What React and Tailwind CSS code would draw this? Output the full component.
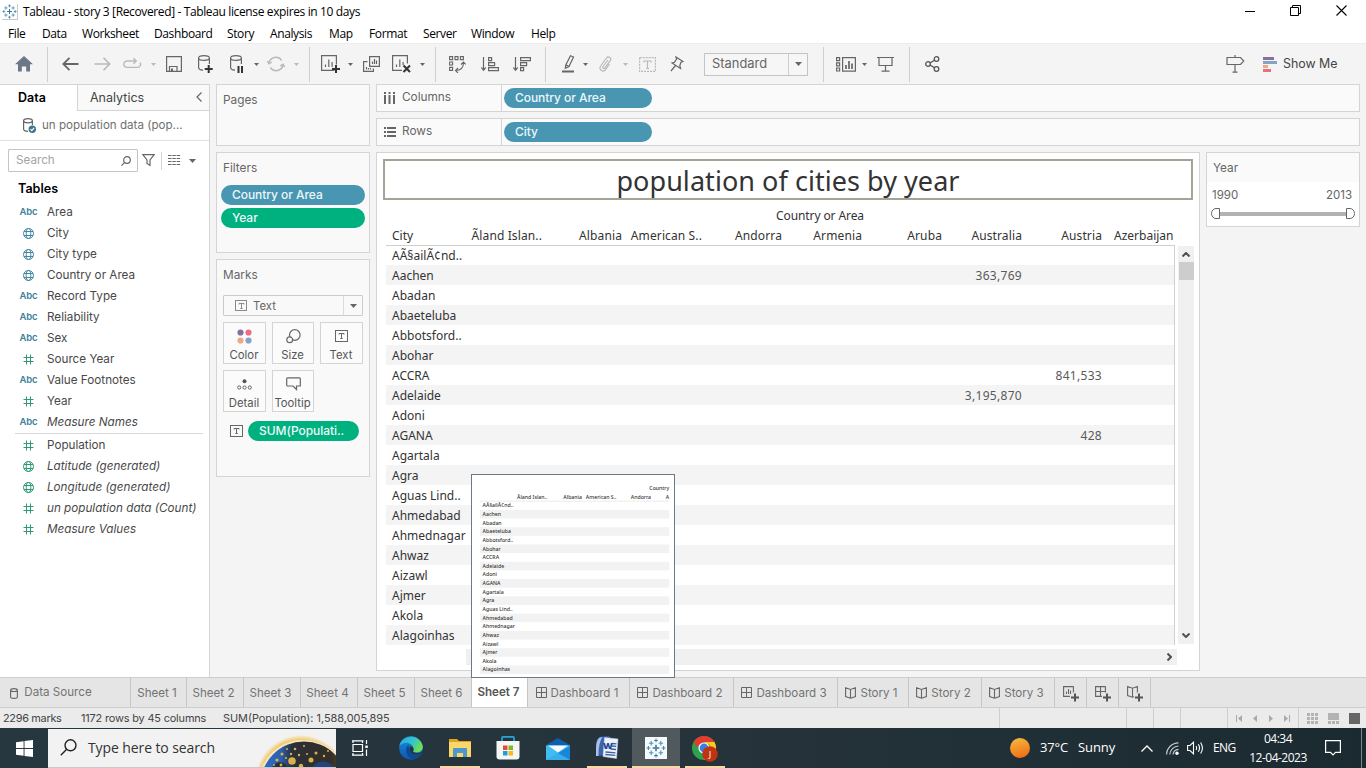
import React from 'react';

const UI = "font-['Inter',sans-serif]";
const VIZ = "font-['Noto_Sans',sans-serif]";
const SYS = "font-['Open_Sans',sans-serif]";

function Svg({ w, h, children, className = '', stroke = '#666', sw = 1.2 }) {
  return (
    <svg width={w} height={h} viewBox={`0 0 ${w} ${h}`} fill="none" stroke={stroke} strokeWidth={sw} className={`block shrink-0 ${className}`}>
      {children}
    </svg>
  );
}

function Slot({ className, children }) {
  return <div className={`flex h-full shrink-0 items-center justify-center ${className}`}>{children}</div>;
}

function Sep({ className = '' }) {
  return <div className={`h-[35px] w-px shrink-0 bg-[#cfcfcf] ${className}`} />;
}

function Caret({ color = '#666' }) {
  return (
    <Svg w={5} h={3} stroke="none">
      <path d="M0 0H5L2.5 3Z" fill={color} />
    </Svg>
  );
}

function TableauMark({ size, className = '' }) {
  return (
    <svg width={size} height={size} viewBox="0 0 24 24" fill="none" className={`block shrink-0 ${className}`}>
      <path d="M12 8v8M8 12h8" stroke="#3c7797" strokeWidth="1.8" />
      <path d="M6.2 3.6v5.4M3.5 6.3h5.4M17.8 3.6v5.4M15.1 6.3h5.4M6.2 15v5.4M3.5 17.7h5.4M17.8 15v5.4M15.1 17.7h5.4" stroke="#5b93b1" strokeWidth="1.4" />
      <path d="M12 .6v4.6M9.7 2.9h4.6M12 18.8v4.6M9.7 21.1h4.6M2.9 9.7v4.6M.6 12h4.6M21.1 9.7v4.6M18.8 12h4.6" stroke="#4f86a5" strokeWidth="1.3" />
    </svg>
  );
}

function TitleBar() {
  return (
    <div className="flex h-[22px] items-center bg-white">
      <div className="ml-[2px] mt-[1px] flex size-4 items-center justify-center border-b border-r border-[#c9c9c9]">
        <TableauMark size={15} />
      </div>
      <div className={`${SYS} ml-[5px] mt-[2px] whitespace-nowrap text-[12px] tracking-[-0.37px] text-black`}>
        Tableau - story 3 [Recovered] - Tableau license expires in 10 days
      </div>
      <div className="ml-auto flex items-center pr-[19px]">
        <Svg w={10} h={11} stroke="#000" sw={1}><path d="M0 5.5H10" /></Svg>
        <Svg w={11} h={11} stroke="#000" sw={1} className="-mt-px ml-[35px]"><path d="M.5 2.5h8v8h-8zM2.5 2.5v-2h8v8h-2" /></Svg>
        <Svg w={11} h={11} stroke="#000" sw={1.1} className="-mt-px ml-[35px]"><path d="M.5.5l10 10M10.500.5l-10 10" /></Svg>
      </div>
    </div>
  );
}

const MENUS = [
  ['File', 'w-[34px]'], ['Data', 'w-[40px]'], ['Worksheet', 'w-[72px]'], ['Dashboard', 'w-[73px]'], ['Story', 'w-[43px]'],
  ['Analysis', 'w-[59px]'], ['Map', 'w-[40px]'], ['Format', 'w-[54px]'], ['Server', 'w-[48px]'], ['Window', 'w-[60px]'], ['Help', 'w-[40px]'],
];

function MenuBar() {
  return (
    <div className={`flex h-[21px] items-center bg-white pl-[8px] pt-[3px] ${SYS} text-[12px] tracking-[-0.38px] text-black`}>
      {MENUS.map(([m, w]) => <div key={m} className={`${w} shrink-0`}>{m}</div>)}
    </div>
  );
}

const OFF = '#b9b9b9';

function Toolbar() {
  return (
    <div className="flex h-[41px] items-center border-t border-[#ececec] bg-[#f4f4f4]">
      <Slot className="w-[47px]">
        <Svg w={18} h={16} stroke="none"><path d="M9 0L18 8.300H15V15.500H11.200V10.500H6.800V15.500H3V8.300H0Z" fill="#6b7785" /></Svg>
      </Slot>
      <Sep />
      <Slot className="ml-[6px] w-8"><Svg w={17} h={14} sw={1.8}><path d="M7.500.8L1.300 7l6.200 6.200M1.500 7H16.500" /></Svg></Slot>
      <Slot className="w-8"><Svg w={17} h={14} sw={1.6} stroke={OFF}><path d="M9.500.8L15.700 7l-6.200 6.200M15.500 7H.5" /></Svg></Slot>
      <Slot className="w-7"><Svg w={19} h={12} stroke={OFF} sw={1.4}><path d="M12.500 3H4a3.200 3.200 0 0 0 0 6.400H14.500a3 3 0 0 0 2.500-4.800M10.500.300L13.200 3l-2.700 2.700" /></Svg></Slot>
      <Slot className="w-[14px]"><Caret color={OFF} /></Slot>
      <Slot className="w-7"><Svg w={16} h={16}><path d="M.6.6H15.400V15.400H.6ZM3.500 15.400V10.500H11V15.400" /><path d="M5 12.500h2v2.500H5z" fill="#666" stroke="none" /></Svg></Slot>
      <Slot className="w-[35px]">
        <Svg w={15} h={18} className="mr-px"><path d="M11.400 9V3M.6 3V12.500C.6 14 2.500 15 5 15.100M11.400 3C11.400 4.500 9 5.300 6 5.300S.6 4.500.6 3 3 .6 6 .6s5.400 1 5.400 2.400Z" /><path d="M10.700 10v8M6.700 14h8" stroke="#333" strokeWidth="2" /></Svg>
      </Slot>
      <Slot className="w-[26px]">
        <Svg w={13} h={18}><path d="M11.400 9V3M.6 3V12.500C.6 14 2.500 15 5 15.100M11.400 3C11.400 4.500 9 5.300 6 5.300S.6 4.500.6 3 3 .6 6 .6s5.400 1 5.400 2.400Z" /><path d="M8.500 11v7M12 11v7" stroke="#333" strokeWidth="2" /></Svg>
      </Slot>
      <Slot className="w-[14px]"><Caret /></Slot>
      <Slot className="w-[26px]"><Svg w={18} h={16} stroke={OFF} sw={1.4}><path d="M2 7A7 7 0 0 1 14.700 4.500M16 9A7 7 0 0 1 3.300 11.500M.2 5L2 7.800 4.800 6M17.800 11L16 8.200 13.200 10" /></Svg></Slot>
      <Slot className="w-[14px]"><Caret color={OFF} /></Slot>
      <Sep className="ml-[6px]" />
      <Slot className="ml-[6px] w-7">
        <Svg w={19} h={18}><path d="M13.500 15.400H.6V.6H15.400V9.500M4.500 12V9.500M7.800 12V4.500M11.100 12V7" /><path d="M15 10v8M11 14h8" stroke="#333" strokeWidth="2" /></Svg>
      </Slot>
      <Slot className="w-3"><Caret /></Slot>
      <Slot className="w-8"><Svg w={17} h={16} className="mr-[2px]"><path d="M6.600.6H16.400V10.400H6.600ZM4.500 5.600H.6V15.400H10.400V12.500M3.500 13.500V11M5.500 13.500V12M7.500 13.500V12M9.500 8V5.500M11.500 8V3M13.500 8V4.500" /></Svg></Slot>
      <Slot className="w-7">
        <Svg w={20} h={18}><path d="M10 15.400H.6V.6H15.400V8.500M4.500 12V9.500M7.800 12V4.500M11.100 10V7" /><path d="M11.500 10.500l6.500 6.500M18 10.500L11.500 17" stroke="#333" strokeWidth="2" /></Svg>
      </Slot>
      <Slot className="w-3"><Caret /></Slot>
      <Sep className="ml-[7px]" />
      <Slot className="ml-[5px] w-8">
        <Svg w={17} h={17} sw={1.1}><path d="M.6.6h3v3h-3zM6 .6h3v3H6zM11.400.6h3v3h-3zM.6 6h3v3h-3zM.6 11.400h3v3h-3z" /><path d="M6.500 14.500C11.500 14.500 14.500 11.500 14.500 6.500M12 8.500L14.500 6l2.300 2.500M9 12L6.500 14.500 9 17" /></Svg>
      </Slot>
      <Slot className="w-[34px]">
        <Svg w={18} h={15}><path d="M2.500 0V13M.3 10.500L2.500 13.200 4.700 10.500M7.600.6h3v3h-3zM7.600 5.600h6v3h-6zM7.600 10.600h9.800v3H7.600z" /></Svg>
      </Slot>
      <Slot className="w-[30px]">
        <Svg w={18} h={15}><path d="M2.500 0V13M.3 10.500L2.500 13.200 4.700 10.500M7.600.6h9.800v3H7.600zM7.600 5.600h6v3h-6zM7.600 10.600h3v3h-3z" /></Svg>
      </Slot>
      <Sep className="ml-2" />
      <Slot className="ml-3 w-5">
        <Svg w={13} h={18}><path d="M8.500.700L11.500 2 7 11.500 3.300 13.200 3.800 9.900ZM3.800 9.900L7 11.500" /><path d="M0 16.500H12" stroke="#666" strokeWidth="2" /></Svg>
      </Slot>
      <Slot className="w-[14px]"><Caret /></Slot>
      <Slot className="w-[26px]"><Svg w={13} h={16} stroke={OFF}><path d="M9 4L4 10.500a1.200 1.200 0 0 0 2 1.400L11.300 4.600A2.300 2.300 0 0 0 7.500 2L1.700 10A3 3 0 0 0 6.500 13.700L10.500 8" /></Svg></Slot>
      <Slot className="w-[14px]"><Caret color={OFF} /></Slot>
      <Slot className="w-8">
        <Svg w={17} h={15} stroke={OFF} className="mr-px"><path d="M.6.6H16.400V14.400H.6Z" strokeDasharray="2 1" /><path d="M5 5.500V4H12V5.500M8.500 4V11.500M7 11.500h3" /></Svg>
      </Slot>
      <Slot className="w-[26px]"><Svg w={14} h={16}><path d="M6 1l7 4.500-2 .700-1.200 3.300.700 3L2 7l2.500-.800L6.600 3Z M5.500 9.500L1 15" /></Svg></Slot>
      <div className="ml-[14px] flex h-[23px] w-[104px] shrink-0 items-center border border-[#c4c4c4] bg-[#f6f6f6]">
        <div className={`${UI} grow pl-[7px] text-[12.9px] text-[#666]`}>Standard</div>
        <div className="flex h-full w-[19px] items-center justify-center border-l border-[#cfcfcf]">
          <Svg w={7} h={4} stroke="none"><path d="M0 0H7L3.500 4Z" fill="#666" /></Svg>
        </div>
      </div>
      <Sep className="ml-[15px]" />
      <Slot className="ml-2 w-7">
        <Svg w={20} h={15}><path d="M.6.6h3v3h-3zM.6 5.800h3v3h-3zM.6 11h3v3h-3zM6.600.6H19.400V14.100H6.600Z" /><path d="M10 12V8M13 12V4M16 12V6.500" strokeWidth="1.7" /></Svg>
      </Slot>
      <Slot className="w-2"><Caret /></Slot>
      <Slot className="w-[34px]"><Svg w={17} h={16}><path d="M0 1.500H17M2 1.500V9.500H15V1.500M8.500 9.500V15M4.500 15.200H12.500" /></Svg></Slot>
      <Sep className="ml-[7px]" />
      <Slot className="ml-2 w-7">
        <Svg w={15} h={16} sw={1.3} stroke="#555"><circle cx="3" cy="8" r="2.300" /><circle cx="11.500" cy="3" r="2.300" /><circle cx="11.500" cy="13" r="2.300" /><path d="M5 7L9.500 4.200M5 9l4.500 2.800" /></Svg>
      </Slot>
      <Svg w={19} h={18} className="ml-auto"><path d="M1 2.500H14.500L17.800 6 14.500 9.500H1ZM9 0V2.500M9 9.500V17M6.500 17.200h5" /></Svg>
      <Svg w={14} h={15} stroke="none" className="ml-[18px]">
        <path d="M0 0h11v3H0z" fill="#86719a" /><path d="M0 4h14v3H0z" fill="#85a3c5" /><path d="M0 8h5v3H0z" fill="#eda981" /><path d="M0 12h8v3H0z" fill="#e8707d" />
      </Svg>
      <div className={`${UI} ml-[6px] mr-[28px] w-[55px] text-[12.4px] text-[#444]`}>Show&nbsp;Me</div>
    </div>
  );
}

const BLUE = '#4587a5';
const GREEN = '#2f9a75';

function FieldIcon({ kind, color }) {
  if (kind === 'abc') return <span className="text-[9.5px] font-semibold tracking-[-0.1px] text-[#417f9b]">Abc</span>;
  if (kind === 'num') return <Svg w={11} h={11} stroke={color} sw={1}><path d="M3.500 .5V10.500M7.500 .5V10.500M.5 3.500H10.500M.5 7.500H10.500" /></Svg>;
  return (
    <Svg w={11} h={11} stroke={color} sw={1}>
      <circle cx="5.500" cy="5.500" r="5" /><ellipse cx="5.500" cy="5.500" rx="2.300" ry="5" /><path d="M1 3.500H10M1 7.500H10" />
    </Svg>
  );
}

const DIMS = [
  ['abc', 'Area'], ['geo', 'City'], ['geo', 'City type'], ['geo', 'Country or Area'], ['abc', 'Record Type'], ['abc', 'Reliability'],
  ['abc', 'Sex'], ['num', 'Source Year', GREEN], ['abc', 'Value Footnotes'], ['num', 'Year', GREEN], ['abc', 'Measure Names', BLUE, true],
];
const MEAS = [
  ['num', 'Population'], ['geo', 'Latitude (generated)', true], ['geo', 'Longitude (generated)', true],
  ['num', 'un population data (Count)', true], ['num', 'Measure Values', true],
];

function Field({ kind, name, color, italic }) {
  return (
    <div className="flex h-[21px] items-center text-[11.7px] text-[#484848]">
      <div className="ml-[18px] flex w-[21px] shrink-0 justify-center">
        <FieldIcon kind={kind} color={color} />
      </div>
      <div className={`ml-[8px] whitespace-nowrap ${italic ? 'italic' : ''}`}>{name}</div>
    </div>
  );
}

function Sidebar() {
  return (
    <div className={`flex w-[210px] shrink-0 flex-col border-r border-[#d4d4d4] bg-white ${UI}`}>
      <div className="flex h-[27px] shrink-0 border-t border-[#d4d4d4] text-[12.5px]">
        <div className="w-[77px] pl-[18px] pt-[4px] font-semibold text-black">Data</div>
        <div className="flex grow items-start justify-between border-b border-l border-[#d4d4d4] bg-[#f9f9f9] pl-[12px] pr-[7px] pt-[4px] text-[#444]">
          <span>Analytics</span>
          <Svg w={6} h={10} className="mt-[3px]"><path d="M5.500.5L1 5l4.500 4.500" /></Svg>
        </div>
      </div>
      <div className="flex h-[30px] shrink-0 items-center border-b border-[#e0e0e0] pl-[23px] text-[11.6px] text-[#707070]">
        <Svg w={13} h={15}>
          <path d="M9.400 7V2.800M.6 2.800V11C.6 12.500 2.500 13.300 5 13.300M9.400 2.800C9.400 4 7.500 4.800 5 4.800S.6 4 .6 2.800 2.500.6 5 .6s4.400 1 4.400 2.200Z" />
          <circle cx="9.300" cy="11.200" r="3.700" fill="#38788f" stroke="none" /><path d="M7.500 11.200l1.300 1.400 2.300-2.700" stroke="#fff" />
        </Svg>
        <span className="ml-[6px] whitespace-nowrap">un population data (pop...</span>
      </div>
      <div className="flex h-[39px] shrink-0 items-center pl-[8px]">
        <div className="flex h-[23px] w-[130px] items-center justify-between rounded-[1px] border border-[#c4c4c4] pl-[7px] pr-[6px] text-[11.7px] text-[#a5a5a5]">
          <span>Search</span>
          <Svg w={10} h={10}><circle cx="6" cy="4" r="3.300" /><path d="M3.700 6.400L.5 9.600" /></Svg>
        </div>
        <Svg w={13} h={13} className="ml-[4px]"><path d="M.8.6H12.200L8 6V11.500L5 9.500V6Z" /></Svg>
        <div className="ml-[6px] h-[18px] w-px bg-[#d4d4d4]" />
        <Svg w={13} h={11} className="ml-[6px]"><path d="M0 .5H12.500M0 3.500H12.500M0 6.500H12.500M0 9.500H12.500" strokeDasharray="3.500 .8" strokeWidth="1" /></Svg>
        <Svg w={7} h={4} stroke="none" className="ml-[8px]"><path d="M0 0H7L3.500 4Z" fill="#666" /></Svg>
      </div>
      <div className="h-[22px] shrink-0 pl-[18px] text-[12.6px] font-semibold leading-[18px] text-black">Tables</div>
      {DIMS.map(([k, n, c, i]) => <Field key={n} kind={k} name={n} color={c || BLUE} italic={i} />)}
      <div className="ml-[15px] mr-[6px] h-px shrink-0 bg-[#d9d9d9]" />
      <div className="mt-px flex flex-col">
        {MEAS.map(([k, n, i]) => <Field key={n} kind={k} name={n} color={GREEN} italic={i} />)}
      </div>
    </div>
  );
}

function Pill({ className, children }) {
  return (
    <div className={`flex h-5 shrink-0 items-center rounded-full pl-[11px] text-[12px] font-medium tracking-[-0.05px] text-[#edf7fa] ${className}`}>{children}</div>
  );
}

function TIcon({ w = 13, h = 12, stroke = '#666' }) {
  return (
    <Svg w={w} h={h} stroke={stroke} sw={1}>
      <rect x=".5" y=".5" width={w - 1} height={h - 1} />
      <path d="M4 4.500V3.500H9V4.500M6.500 3.500V8.500M5.300 8.500h2.400" />
    </Svg>
  );
}

function MarkButton({ label, className, children }) {
  return (
    <div className={`flex h-[42px] flex-col items-center border border-[#d4d4d4] bg-[#fbfbfb] ${className}`}>
      <div className="flex h-[26px] items-center">{children}</div>
      <div className="pr-px text-[11.3px] leading-[13px] text-[#555]">{label}</div>
    </div>
  );
}

function Cards() {
  const card = 'w-full shrink-0 border border-[#d4d4d4] bg-[#f9f9f9]';
  return (
    <div className={`ml-[6px] flex w-[154px] shrink-0 flex-col gap-[6px] ${UI} text-[11.8px] text-[#666]`}>
      <div className={`${card} h-[62px] pl-[6px] pt-[6px] leading-[18px]`}>Pages</div>
      <div className={`${card} h-[101px] pl-[6px] pt-[6px] leading-[18px]`}>
        Filters
        <div className="-ml-[2px] mt-[8px] flex w-[144px] flex-col gap-[3px]">
          <Pill className="bg-[#4996b2]">Country or Area</Pill>
          <Pill className="bg-[#00b180]">Year</Pill>
        </div>
      </div>
      <div className={`${card} h-[218px] pl-[6px] pt-[6px] leading-[18px]`}>
        Marks
        <div className="mt-[11px] flex h-[21px] w-[140px] items-center rounded-[1px] border border-[#cbcbcb] pl-[11px]">
          <TIcon w={12} h={11} stroke="#8a8a8a" />
          <span className="ml-[6px] grow text-[11.4px]">Text</span>
          <div className="flex h-full w-[19px] items-center justify-center border-l border-[#dcdcdc]">
            <Svg w={7} h={4} stroke="none"><path d="M0 0H7L3.500 4Z" fill="#666" /></Svg>
          </div>
        </div>
        <div className="mt-[6px] grid w-[140px] grid-cols-[43px_42px_43px] gap-[6px]">
          <MarkButton label="Color">
            <Svg w={15} h={15} stroke="none"><circle cx="3.500" cy="3.500" r="3.100" fill="#84719a" /><circle cx="11.500" cy="3.500" r="3.100" fill="#ec6f80" /><circle cx="3.500" cy="11.500" r="3.100" fill="#eda981" /><circle cx="11.500" cy="11.500" r="3.100" fill="#85a3c5" /></Svg>
          </MarkButton>
          <MarkButton label="Size">
            <Svg w={15} h={15}><circle cx="8.800" cy="6" r="5.300" /><circle cx="3.700" cy="10.800" r="2.900" fill="#fbfbfb" /></Svg>
          </MarkButton>
          <MarkButton label="Text"><TIcon /></MarkButton>
          <MarkButton label="Detail">
            <Svg w={15} h={11} sw={1}><circle cx="7.500" cy="2.200" r="2" fill="#555" stroke="none" /><circle cx="2.200" cy="8.500" r="1.600" /><circle cx="7.500" cy="8.500" r="1.600" /><circle cx="12.800" cy="8.500" r="1.600" /></Svg>
          </MarkButton>
          <MarkButton label="Tooltip">
            <Svg w={15} h={14}><path d="M1.600.8H13.400Q14.300.8 14.300 1.700V9H10.500V12.500L7 9H1.600Q.7 9 .7 8.100V1.700Q.7.8 1.600.8Z" /></Svg>
          </MarkButton>
        </div>
        <div className="mt-[9px] flex items-center pl-[7px]">
          <TIcon />
          <Pill className="ml-[5px] w-[111px] bg-[#00b180]">SUM(Populati..</Pill>
        </div>
      </div>
    </div>
  );
}

function Shelf({ label, icon, value }) {
  return (
    <div className={`flex h-7 shrink-0 items-center border border-[#d4d4d4] bg-[#fafafa] ${UI}`}>
      <div className="flex h-full w-[125px] items-center border-r border-[#d4d4d4] pl-[6px] text-[11.8px] text-[#666]">
        <div className="flex w-[13px] justify-center">{icon}</div>
        <span className="ml-[6px]">{label}</span>
      </div>
      <Pill className="ml-[2px] w-[148px] bg-[#4996b2]">{value}</Pill>
    </div>
  );
}

const COUNTRIES = ['Ãland Islan..', 'Albania', 'American S..', 'Andorra', 'Armenia', 'Aruba', 'Australia', 'Austria'];
const ROWS = [
  ['AÃ§ailÃ¢nd..'], ['Aachen', 6, '363,769'], ['Abadan'], ['Abaeteluba'], ['Abbotsford..'], ['Abohar'], ['ACCRA', 7, '841,533'],
  ['Adelaide', 6, '3,195,870'], ['Adoni'], ['AGANA', 7, '428'], ['Agartala'], ['Agra'], ['Aguas Lind..'], ['Ahmedabad'], ['Ahmednagar'],
  ['Ahwaz'], ['Aizawl'], ['Ajmer'], ['Akola'], ['Alagoinhas'],
];

function CrossTab() {
  return (
    <div className={`w-[789px] shrink-0 text-[12px] leading-[20px] text-[#333] ${VIZ}`}>
      <div className="pl-[79px] text-center tracking-[-0.1px]">Country or Area</div>
      <div className="flex h-[19px]">
        <div className="w-20 pl-[6px]">City</div>
        {COUNTRIES.map((c) => <div key={c} className="w-20 whitespace-nowrap pr-[4px] text-right tracking-[0.12px]">{c}</div>)}
        <div className="pl-[8px]">Azerbaijan</div>
      </div>
      <div className="border-r border-t border-[#cfcfcf]">
        {ROWS.map(([city, col, val], i) => (
          <div key={city} className={`flex ${i === 0 ? 'h-[19px]' : 'h-5 pt-px'} ${i % 2 ? 'bg-[#f4f4f4]' : ''}`}>
            <div className="w-20 whitespace-nowrap pl-[6px]">{city}</div>
            {COUNTRIES.map((c, j) => (
              <div key={c} className="w-20 pr-[4px] text-right tracking-[0.3px] text-[#5a5a5a]">{j === col ? val : ''}</div>
            ))}
          </div>
        ))}
      </div>
    </div>
  );
}

function MiniCrossTab() {
  return (
    <div className={`w-[438px] text-left text-[12px] font-medium leading-[20px] text-[#333] ${VIZ}`}>
      <div className="text-right">Country</div>
      <div className="flex h-[19px] pl-20">
        {COUNTRIES.slice(0, 4).map((c) => <div key={c} className="w-20 shrink-0 whitespace-nowrap pr-[4px] text-right">{c}</div>)}
        <div className="grow text-right">A</div>
      </div>
      <div className="border-t border-[#cfcfcf]">
        {ROWS.map(([city], i) => (
          <div key={city} className={`h-5 whitespace-nowrap pl-[6px] ${i % 2 ? 'bg-[#f2f2f2]' : ''}`}>{city}</div>
        ))}
      </div>
    </div>
  );
}

function View() {
  return (
    <div className="flex h-[519px] w-[824px] shrink-0 flex-col border border-[#d4d4d4] bg-white pl-[9px]">
      <div className={`-ml-[3px] mt-[6px] flex h-[41px] w-[810px] shrink-0 items-center justify-center border-2 border-[#a5a396] pt-[3px] text-[27px] tracking-[0.05px] text-[#333] ${VIZ}`}>
        population of cities by year
      </div>
      <div className="mt-[6px] flex">
        <CrossTab />
        <div className="ml-[3px] mt-[40px] flex h-[398px] w-4 flex-col items-center bg-[#f0f0f0]">
          <Svg w={8} h={5} sw={2} stroke="#505050" className="mt-[6px]"><path d="M.5 4.500L4 1l3.500 3.500" /></Svg>
          <div className="mt-[5px] h-[18px] w-[15px] bg-[#cdcdcd]" />
          <Svg w={8} h={5} sw={2} stroke="#505050" className="mb-[6px] mt-auto"><path d="M.5.500L4 4 7.500.5" /></Svg>
        </div>
      </div>
      <div className="ml-[80px] mt-[4px] flex h-4 w-[711px] shrink-0 items-center justify-end bg-[#f0f0f0] pr-[5px]">
        <Svg w={5} h={8} sw={2} stroke="#505050"><path d="M.5.5L4 4 .5 7.500" /></Svg>
      </div>
    </div>
  );
}

function YearFilter() {
  return (
    <div className={`flex h-[75px] w-[154px] flex-col border border-[#d4d4d4] bg-white text-[11.500px] text-[#666] ${UI}`}>
      <div className="h-[29px] bg-[#fafafa] pl-[6px] pt-[6px] text-[11.8px] leading-[18px]">Year</div>
      <div className="flex justify-between pl-[5px] pr-[7px] pt-[4px] leading-[19px]"><span>1990</span><span>2013</span></div>
      <div className="mt-[3px] flex items-center pl-[4px]">
        <Svg w={9} h={11} sw={1}><path d="M8.500.5V10.500H5A4.500 5 0 0 1 5 .5Z" fill="#fff" /></Svg>
        <div className="h-[4px] w-[126px] bg-[#b2b2b2]" />
        <Svg w={9} h={11} sw={1}><path d="M.5.5V10.500H4A4.500 5 0 0 0 4 .5Z" fill="#fff" /></Svg>
      </div>
    </div>
  );
}

const GridIcon = () => <Svg w={11} h={11} sw={1} className="-mt-[2px]"><path d="M.5.5H10.500V10.500H.5ZM5.500.5V10.500M.5 5.500H10.500" /></Svg>;
const BookIcon = () => <Svg w={11} h={12} sw={1.1} className="-mt-[2px]"><path d="M.6.8L5.500 2.500 10.400.8V9.500L5.500 11.200.6 9.500ZM5.500 2.500V11.200" /></Svg>;

const TABS = [
  ['Sheet 1', 'w-[56px]'], ['Sheet 2', 'w-[57px]'], ['Sheet 3', 'w-[57px]'], ['Sheet 4', 'w-[57px]'], ['Sheet 5', 'w-[57px]'], ['Sheet 6', 'w-[57px]'],
  ['Sheet 7', 'w-[56px]'], ['Dashboard 1', 'w-[102px]', GridIcon], ['Dashboard 2', 'w-[104px]', GridIcon], ['Dashboard 3', 'w-[104px]', GridIcon],
  ['Story 1', 'w-[71px]', BookIcon], ['Story 2', 'w-[73px]', BookIcon], ['Story 3', 'w-[73px]', BookIcon],
];

function Thumbnail() {
  return (
    <div className="absolute -left-px bottom-[29px] z-10 h-[204px] w-[204px] border border-[#6b7885] bg-white pl-[8px] pt-[9px]">
      <div className="h-[190px] w-[190px]">
        <div className="w-[438px] origin-top-left scale-[0.432]"><MiniCrossTab /></div>
      </div>
    </div>
  );
}

function SheetTabs() {
  const plus = <path d="M13 8.500v8M9 12.500h8" stroke="#555" strokeWidth="2" />;
  const cell = 'flex h-full shrink-0 items-center justify-center border-r border-[#c6c6c6]';
  return (
    <div className={`flex h-[31px] items-center border-b border-t border-[#cdcdcd] bg-[#e5e5e5] ${UI} text-[11.600px] text-[#737373]`}>
      <div className={`${cell} w-[131px] gap-[6px] pr-[28px] pt-px`}>
        <Svg w={8} h={11} sw={1.1}><path d="M7.400 2.200V9C7.400 10 6 10.400 4 10.400S.6 10 .6 9V2.200M7.400 2.200C7.400 3 6 3.500 4 3.500S.6 3 .6 2.200 2 .6 4 .6s3.400.7 3.400 1.600Z" /></Svg>
        Data Source
      </div>
      {TABS.map(([t, w, I]) =>
        t === 'Sheet 7' ? (
          <div key={t} className={`${cell} ${w} relative bg-white pr-[2px] font-semibold text-[#555]`}>
            {t}
            <Thumbnail />
          </div>
        ) : (
          <div key={t} className={`${cell} ${w} gap-[4px] whitespace-nowrap pr-[3px] pt-[2px]`}>
            {I ? <I /> : null}
            <span>{t}</span>
          </div>
        ),
      )}
      <div className={`${cell} w-8`}><Svg w={17} h={17} sw={1.1} className="mt-[2px]"><path d="M8 11.400H1.600V1.600H11.400V7.500M4.500 9V6.500M6.500 9V4M8.500 9V5.500" />{plus}</Svg></div>
      <div className={`${cell} w-8`}><Svg w={17} h={17} sw={1.1} className="mt-[2px]"><path d="M8 11.400H1.600V1.600H11.400V7.500M6.500 1.600V11.400M1.600 6.500H11.400" />{plus}</Svg></div>
      <div className={`${cell} w-8`}><Svg w={17} h={17} sw={1.1} className="mt-[2px]"><path d="M8 11.800L6.500 12.200 1.600 10.500V1.500L6.500 3.200 11.400 1.500V7.500M6.500 3.200V12.200" />{plus}</Svg></div>
    </div>
  );
}

function StatusBar() {
  const cell = 'h-full shrink-0 border-l border-[#cfcfcf]';
  return (
    <div className={`flex h-5 items-center bg-[#ebebeb] pl-[3px] ${UI} whitespace-nowrap text-[10.900px] text-[#444]`}>
      <div className="w-[78px] tracking-[-0.3px]">2296 marks</div>
      <div className="w-[142px] tracking-[-0.15px]">1172 rows by 45 columns</div>
      <div>SUM(Population): 1,588,005,895</div>
      <div className={`${cell} ml-auto w-[127px]`} />
      <div className={`${cell} w-[27px]`} />
      <div className={`${cell} w-[27px]`} />
      <div className={`${cell} w-[47px]`} />
      <div className={`${cell} flex w-[71px] items-center gap-[10px] pl-[8px]`}>
        <Svg w={7} h={7} stroke="none"><path d="M0 0h1v7H0zM6 0v7L2 3.500Z" fill="#aaa" /></Svg>
        <Svg w={5} h={7} stroke="none"><path d="M4 0v7L0 3.500Z" fill="#aaa" /></Svg>
        <Svg w={5} h={7} stroke="none"><path d="M1 0v7L5 3.500Z" fill="#aaa" /></Svg>
        <Svg w={7} h={7} stroke="none"><path d="M6 0h1v7H6zM1 0v7L5 3.500Z" fill="#aaa" /></Svg>
      </div>
      <div className={`${cell} flex w-[68px] items-center gap-[10px] pl-[8px]`}>
        <Svg w={11} h={11} stroke="none"><path d="M0 0h3v3H0zM4 0h3v3H4zM8 0h3v3H8zM0 4h3v3H0zM4 4h3v3H4zM8 4h3v3H8zM0 8h3v3H0zM4 8h3v3H4zM8 8h3v3H8z" fill="#b3b3b3" /></Svg>
        <Svg w={11} h={11} stroke="none"><path d="M0 0h11v7H0zM0 8h3v3H0zM4 8h3v3H4zM8 8h3v3H8z" fill="#b3b3b3" /></Svg>
        <Svg w={11} h={11} stroke="none"><path d="M0 0h11v11H0z" fill="#666" /></Svg>
      </div>
    </div>
  );
}

function TaskApp({ className = '', running, active, children }) {
  return (
    <div className={`flex h-full shrink-0 flex-col items-center ${active ? 'bg-[#50595d]' : ''} ${className}`}>
      <div className="flex h-[38px] items-center pt-[2px]">{children}</div>
      {running ? <div className="h-[2px] w-full bg-[#f8d7a0]" /> : null}
    </div>
  );
}

function Taskbar() {
  return (
    <div className={`flex h-10 items-center bg-linear-to-r from-[#263740] via-[#26333b] to-[#1b2a31] ${SYS} whitespace-nowrap text-white`}>
      <div className="flex w-12 shrink-0 justify-center">
        <Svg w={17} h={17} stroke="none"><path d="M0 2.300L7.600 1.200V8H0zM8.500 1.100L17 0V8H8.500zM0 9H7.600V15.800L0 14.700zM8.500 9H17V17L8.500 15.900z" fill="#fff" /></Svg>
      </div>
      <div className="flex h-[39px] w-[288px] shrink-0 items-center border-b border-[#c9c9c9] bg-[#f2f2f2] pl-[12px]">
        <Svg w={17} h={17} stroke="#222" sw={1.400}><circle cx="10.500" cy="6.300" r="5.500" /><path d="M6.700 10.200L.8 16.200" /></Svg>
        <div className="ml-[11px] text-[14px] tracking-[-0.1px] text-[#333]">Type here to search</div>
        <Svg w={78} h={38} stroke="none" className="ml-auto">
          <defs>
            <radialGradient id="halo" cx="43" cy="52" r="46" gradientUnits="userSpaceOnUse"><stop offset=".9" stopColor="#f5cb6a" /><stop offset="1" stopColor="#f2f2f2" /></radialGradient>
            <linearGradient id="globe" x1="0" y1="0" x2="1" y2="0"><stop offset="0" stopColor="#2f6fcb" /><stop offset=".24" stopColor="#2d5fae" /><stop offset=".36" stopColor="#2a3038" /><stop offset=".8" stopColor="#332e28" /><stop offset="1" stopColor="#5a4a38" /></linearGradient>
          </defs>
          <circle cx="43" cy="52" r="46" fill="url(#halo)" />
          <circle cx="45" cy="55.500" r="44.500" fill="#f2f2f2" opacity=".7" />
          <circle cx="46" cy="56" r="43.500" fill="url(#globe)" />
          <path d="M14 39c2-6 10-8 14-3l2 3z" fill="#26313a" />
          <path d="M54 39c4-8 15-8 20-3l4 3z" fill="#24427c" />
          <g fill="#d9b04a"><circle cx="34" cy="32" r="3.800" /><circle cx="53" cy="31" r="2.500" /><circle cx="43" cy="37" r="2.200" /><circle cx="24" cy="25" r="1.500" /><circle cx="19" cy="31" r="1.600" /><circle cx="37" cy="20" r="1.300" /><circle cx="46" cy="17" r="1" /><circle cx="58" cy="24" r="1.500" /><circle cx="66" cy="27" r="1.200" /><circle cx="29" cy="20" r="1" /><circle cx="41" cy="26" r="1.200" /><circle cx="23" cy="36" r="1.400" /><circle cx="16" cy="36" r="1" /><circle cx="49" cy="25" r="1" /><circle cx="70" cy="22" r="1" /><circle cx="33" cy="25" r="1.200" /><circle cx="28" cy="29" r="1.100" /></g>
        </Svg>
      </div>
      <TaskApp className="w-12">
        <Svg w={16} h={16} stroke="#fff"><path d="M0 .8H11.500M0 15.200H11.500M1 4.500H10.500V11.500H1ZM1 .8V3M10.500.8V3M1 13v2.200M10.500 13v2.200M14.500 0V4M14.500 9.500V16" /><path d="M13.300 5.500h2.500V8h-2.500z" fill="#fff" stroke="none" /></Svg>
      </TaskApp>
      <TaskApp className="ml-[3px] w-12">
        <Svg w={24} h={24} stroke="none">
          <defs>
            <linearGradient id="edgeA" x1="0" y1="0" x2="1" y2=".4"><stop offset="0" stopColor="#2aa7e8" /><stop offset=".6" stopColor="#35c4c9" /><stop offset="1" stopColor="#6cdf55" /></linearGradient>
            <linearGradient id="edgeB" x1="0" y1="0" x2="0" y2="1"><stop offset="0" stopColor="#1b8fe0" /><stop offset="1" stopColor="#0b55ad" /></linearGradient>
          </defs>
          <circle cx="12" cy="12" r="11.800" fill="url(#edgeB)" />
          <path d="M.4 10C2-1 19-3.500 23.500 9c1.500 6-4 8-8 7.500-2-.3-1.500-1.500-1-2.500 1-5-5-8.500-9-7C3 7.500 1.500 8.500.4 10Z" fill="url(#edgeA)" />
          <path d="M9.500 8.500c-4 3-3.500 12 4.500 15 4-.5 7-3 8.500-6-6 3.500-13-1-13-9Z" fill="#0c4a94" />
          <path d="M11 10.500c-1.500 3.500 1 7.500 6 8 2.500.2 4-.3 5.300-1.300.8-.7 1.200-1.200 1.200-2-2.500 2.300-6 2-8 1.300-2-.6-1.300-1.700-1-2.500.3-1.500-.5-3.500-3.500-3.500Z" fill="#26353c" />
        </Svg>
      </TaskApp>
      <TaskApp running className="ml-[5px] w-10">
        <Svg w={22} h={20} stroke="none"><path d="M0 1h8l2 2h12v16H0z" fill="#e0a421" /><path d="M0 4h22v15H0z" fill="#fbd76a" /><path d="M4 19v-8q0-1 1-1h12q1 0 1 1v8h-4v-4H8v4z" fill="#4a98cf" /></Svg>
      </TaskApp>
      <TaskApp className="ml-[4px] w-12">
        <Svg w={24} h={24} stroke="none"><path d="M6 6V2q0-1.200 1.200-1.200h9.600Q18 .8 18 2v4" stroke="#2aa3dd" strokeWidth="1.700" /><path d="M.5 5h23v15.500q0 3-3 3h-17q-3 0-3-3z" fill="#f5f5f5" /><path d="M7 9.500h4.500V14H7z" fill="#ea4b2a" /><path d="M12.500 9.500H17V14h-4.500z" fill="#7db928" /><path d="M7 15h4.500v4.500H7z" fill="#1b9fe0" /><path d="M12.500 15H17v4.500h-4.500z" fill="#f6b91c" /></Svg>
      </TaskApp>
      <TaskApp className="ml-[2px] w-12">
        <Svg w={24} h={22} stroke="none" className="mt-px"><path d="M0 7L12 0l12 7v3H0z" fill="#0f5fae" /><path d="M0 7.500h24V22H0z" fill="#3fbcf2" /><path d="M0 22L24 8v14z" fill="#35b0ec" /><path d="M12 15L24 22V8z" fill="#1b86d8" /><path d="M2 7.500h20L12 14.500z" fill="#f4fafd" /></Svg>
      </TaskApp>
      <TaskApp running className="ml-[5px] w-10">
        <Svg w={24} h={23} stroke="none" className="-mt-px"><path d="M4.500 1Q9 0 15 .5V19L1 20V8Q1.500 3 4.500 1z" fill="#3b64ad" /><path d="M1 12Q1 4 5 1.500L7.500 1.300Q3.500 6 3.500 20L1 20z" fill="#a9c1e8" /><path d="M9.500 1.500L23 3 21.500 22.500 8 20.500z" fill="#eef3fb" stroke="#c3cfe4" strokeWidth=".5" /><path d="M17 7.500l4.500.400M16.800 10l4.500.400M15.500 13l5.500.500M10.500 16l10 .900M10.300 18.500l10 .900" stroke="#3d5fa5" strokeWidth="1.300" /><text x="8" y="13" fontSize="9.500" fontWeight="800" fill="#23468f">W</text></Svg>
      </TaskApp>
      <TaskApp running active className="ml-[5px] w-12">
        <div className="flex size-[22px] items-center justify-center bg-[#f5fafc]"><TableauMark size={20} /></div>
      </TaskApp>
      <TaskApp running className="ml-[5px] w-10">
        <Svg w={26} h={26} stroke="none" className="mt-px">
          <circle cx="12" cy="12" r="12" fill="#2da14b" />
          <path d="M1.600 6A12 12 0 0 1 22.400 6H12L7 9.500 5 11z" fill="#e33b2e" />
          <path d="M22.400 6A12 12 0 0 1 12 24L17 15 18 9 12 6z" fill="#fbc91d" />
          <circle cx="12" cy="12" r="5.600" fill="#fff" /><circle cx="12" cy="12" r="4.400" fill="#3a7de8" />
          <circle cx="18" cy="18" r="7.800" fill="#bf3410" /><text x="18" y="21.500" fontSize="9.500" textAnchor="middle" fill="#fff">J</text>
        </Svg>
      </TaskApp>
      <Svg w={20} h={20} stroke="none" className="ml-auto">
        <defs><linearGradient id="sun" x1=".3" y1="0" x2=".6" y2="1"><stop offset="0" stopColor="#f6b73c" /><stop offset="1" stopColor="#ee6d17" /></linearGradient></defs>
        <circle cx="10" cy="10" r="10" fill="url(#sun)" />
      </Svg>
      <div className="ml-[10px] w-[38px] text-[13px] tracking-[-0.15px]">37°C</div>
      <div className="w-[63px] text-[13px] tracking-[-0.1px]">Sunny</div>
      <Svg w={12} h={7} stroke="#fff" sw={1.300}><path d="M.5 6.500L6 1l5.500 5.500" /></Svg>
      <Svg w={13} h={13} stroke="#c4cacd" sw={1.200} className="ml-[13px]"><path d="M.6 12.500A12 12 0 0 1 12.500.8M3.800 12.500A9 9 0 0 1 12.500 4M7 12.500A6 6 0 0 1 12.500 7.300" /><circle cx="11" cy="11.300" r="1.700" fill="#fff" stroke="none" /></Svg>
      <Svg w={17} h={14} stroke="#fff" sw={1.100} className="ml-[8px]"><path d="M.6 4.500H3L6.500 1.200V12.800L3 9.500H.6ZM9 5q1.300 2 0 4M11.300 3.300q2.500 3.700 0 7.400M13.600 1.500q3.700 5.500 0 11" /></Svg>
      <div className="ml-[9px] w-[23px] text-[12px] tracking-[-0.6px]">ENG</div>
      <div className="ml-[11px] flex w-[62px] shrink-0 flex-col items-center text-[12px] leading-[19px] tracking-[-0.5px]"><span>04:34</span><span>12-04-2023</span></div>
      <Svg w={16} h={16} stroke="#fff" sw={1.200} className="ml-[16px]"><path d="M.6.6H15.400V12.400H10.500L8 15 5.500 12.400H.6Z" /></Svg>
      <div className="ml-[20px] mr-[4px] h-full w-px bg-[#7d868a]" />
    </div>
  );
}

export default function App() {
  return (
    <div className="flex h-[768px] w-[1366px] flex-col overflow-hidden bg-[#f4f4f4]">
      <TitleBar />
      <MenuBar />
      <Toolbar />
      <div className="flex h-[593px] shrink-0">
        <Sidebar />
        <Cards />
        <div className="ml-[6px] flex w-[984px] shrink-0 flex-col gap-[6px]">
          <Shelf label="Columns" value="Country or Area" icon={<Svg w={11} h={12} stroke="none"><path d="M0 0h2v2H0zM4.500 0h2v2h-2zM9 0h2v2H9zM0 3h2V12H0zM4.500 3h2V12h-2zM9 3h2V12H9z" fill="#666" /></Svg>} />
          <Shelf label="Rows" value="City" icon={<Svg w={12} h={10} stroke="none"><path d="M0 0h2v2H0zM0 4h2v2H0zM0 8h2v2H0zM3 0H12v2H3zM3 4H12v2H3zM3 8H12v2H3z" fill="#666" /></Svg>} />
          <div className="flex gap-[6px]">
            <View />
            <YearFilter />
          </div>
        </div>
      </div>
      <SheetTabs />
      <StatusBar />
      <Taskbar />
    </div>
  );
}
